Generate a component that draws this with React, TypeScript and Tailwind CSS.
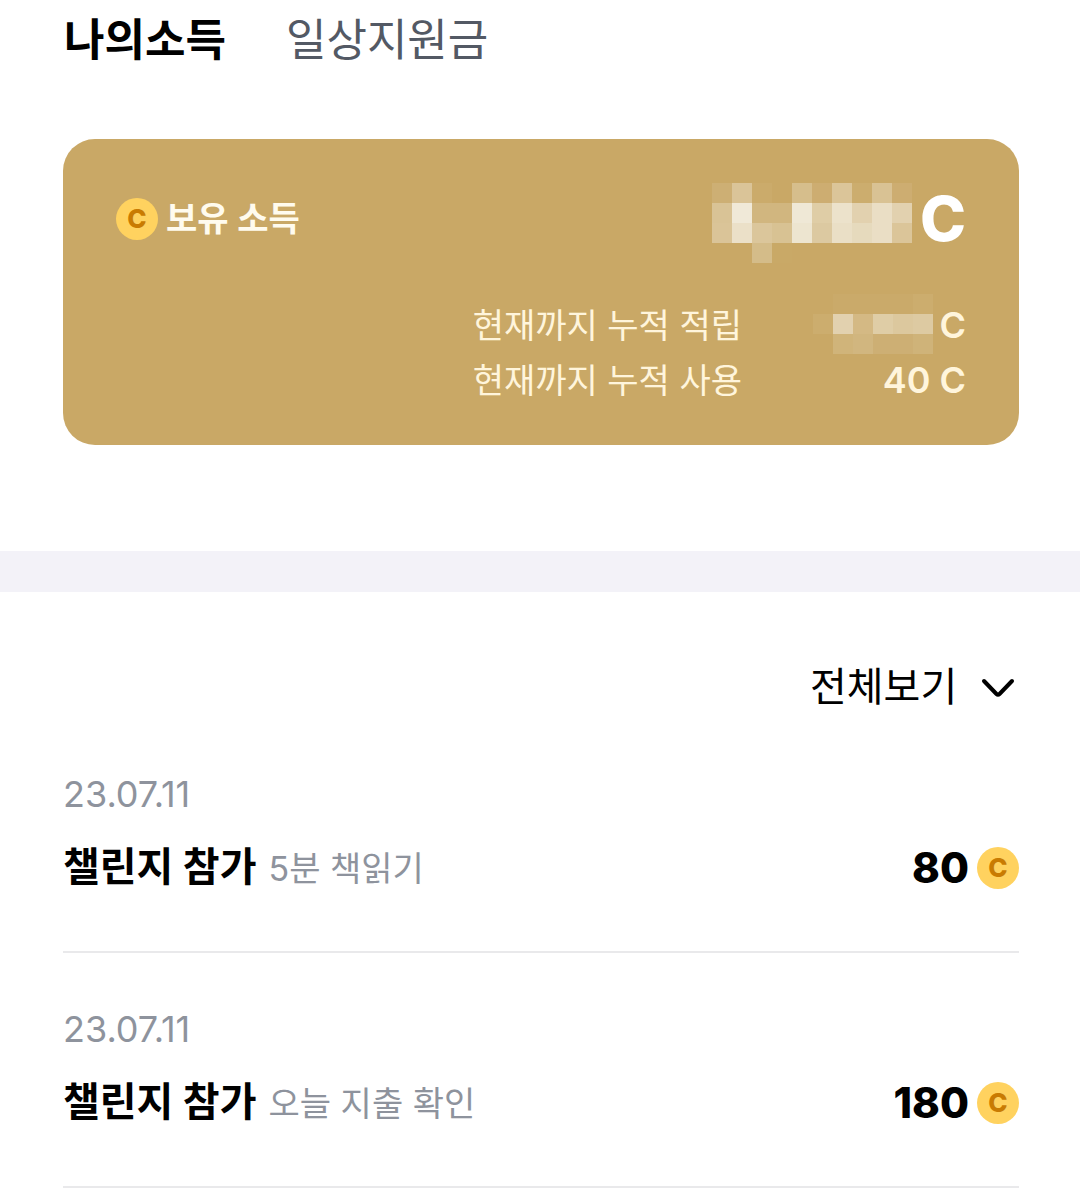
import React from "react";

const LARGE_MASK = [
  [10, 36, 4, 0, 28, 8, 37, 6, 33, 8],
  [34, 82, 18, 18, 80, 46, 72, 52, 68, 52],
  [36, 70, 38, 32, 76, 42, 69, 62, 68, 37],
  [0, 0, 25, 1, 0, 0, 0, 0, 0, 0],
];

const SMALL_MASK = [
  [0, 3, 3, 3, 3, 6],
  [6, 52, 22, 46, 40, 43],
  [0, 15, 18, 10, 10, 14],
];

function Mosaic({ cells, className }: { cells: number[][]; className: string }) {
  const width = cells[0].length * 20;
  const height = cells.length * 20;
  return (
    <svg
      role="img"
      aria-label="가려진 금액"
      viewBox={`0 0 ${width} ${height}`}
      width={width}
      height={height}
      shapeRendering="crispEdges"
      className={className}
    >
      {cells.map((row, y) =>
        row.map((value, x) => (
          <rect key={`${x}-${y}`} x={x * 20} y={y * 20} width="20" height="20" fill="#f9f8f2" fillOpacity={value / 100} />
        )),
      )}
    </svg>
  );
}

function Coin() {
  return (
    <span className="flex size-[42px] shrink-0 items-center justify-center rounded-full bg-[#ffd25f] text-[26px] leading-none font-extrabold text-[#c97b02]">
      C
    </span>
  );
}

const ENTRIES = [
  { date: "23.07.11", title: "챌린지 참가", note: "5분 책읽기", amount: 80 },
  { date: "23.07.11", title: "챌린지 참가", note: "오늘 지출 확인", amount: 180 },
];

export default function App() {
  return (
    <div className="bg-white font-[Inter,'Noto_Sans_CJK_KR',sans-serif] text-black">
      <nav className="flex gap-[60px] px-16 pt-2 text-[44px] leading-[64px]">
        <button type="button" className="font-bold">나의소득</button>
        <button type="button" className="text-[#535964]">일상지원금</button>
      </nav>

      <section className="mt-[67px] mr-[61px] ml-[63px] rounded-[32px] bg-[#c9a866] px-[53px] pt-[45px] pb-[37px] text-[#fff5dc]">
        <div className="flex h-[70px] items-center justify-between">
          <h2 className="flex items-center gap-2 text-[34px] leading-[50px] font-semibold text-[#fffbee]">
            <Coin />
            보유 소득
          </h2>
          <p className="flex items-center gap-2 text-[62px] leading-[70px] font-extrabold text-white">
            <Mosaic cells={LARGE_MASK} className="mt-2" />
            C
          </p>
        </div>
        <dl className="mt-11 text-[34px] leading-[55px]">
          <div className="flex h-[55px] justify-end">
            <dt>현재까지 누적 적립</dt>
            <dd className="flex w-[224px] items-center justify-end gap-[6px] text-[36px] font-semibold">
              <Mosaic cells={SMALL_MASK} className="mb-1" />
              C
            </dd>
          </div>
          <div className="flex h-[55px] justify-end">
            <dt>현재까지 누적 사용</dt>
            <dd className="w-[224px] text-right text-[36px] font-semibold">40 C</dd>
          </div>
        </dl>
      </section>

      <div className="mt-[106px] h-[41px] bg-[#f3f2f8]" />

      <main className="mr-[61px] ml-[63px]">
        <div className="flex justify-end pt-[65px]">
          <label className="relative flex items-center">
            <select aria-label="내역 보기" className="appearance-none bg-transparent pr-[61px] text-[40px] leading-[60px]">
              <option>전체보기</option>
              <option>적립</option>
              <option>사용</option>
            </select>
            <svg
              viewBox="0 0 36 24"
              width="36"
              height="24"
              fill="none"
              stroke="currentColor"
              strokeWidth="4"
              strokeLinecap="round"
              strokeLinejoin="round"
              className="pointer-events-none absolute right-[3px]"
            >
              <path d="M4 6l12.500 13q1.500 1.500 3 0L32 6" />
            </svg>
          </label>
        </div>

        <ul className="mt-[53px]">
          {ENTRIES.map((entry) => (
            <li key={entry.title + entry.note} className="mb-[52px] border-b-2 border-[#e9e9eb] pb-[52px]">
              <p className="text-[36px] leading-[48px] text-[#8e939d]">{entry.date}</p>
              <div className="mt-[19px] flex h-[62px] items-center justify-between">
                <p className="flex items-baseline gap-3 leading-[60px]">
                  <span className="text-[40px] font-bold">{entry.title}</span>
                  <span className="text-[34px] text-[#8e939d]">{entry.note}</span>
                </p>
                <p className="flex items-center gap-2 text-[42px] leading-[60px] font-extrabold">
                  {entry.amount}
                  <Coin />
                </p>
              </div>
            </li>
          ))}
        </ul>
      </main>
    </div>
  );
}
